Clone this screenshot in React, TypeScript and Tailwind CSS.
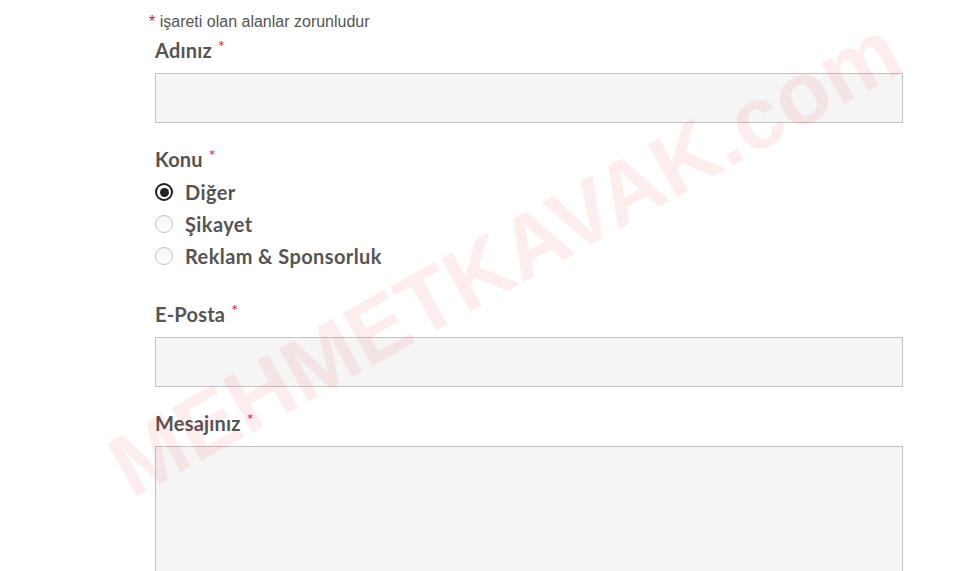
import React from "react"

const Req = () => <span className="ml-[6px] relative top-[-6px] text-[16px] font-normal text-[#e2142d]">*</span>

const Label = ({ children, className = "" }: { children: React.ReactNode; className?: string }) => (
  <div className={`h-[24px] leading-[24px] text-[20px] font-bold text-[#555] tracking-[0.2px] ${className}`}>
    {children}
    <Req />
  </div>
)

const Radio = ({ label, checked = false }: { label: string; checked?: boolean }) => (
  <label className="flex h-[32px] items-center gap-[12px]">
    {checked ? (
      <span className="flex h-[18px] w-[18px] items-center justify-center rounded-full border-2 border-[#222] bg-white">
        <span className="h-[9px] w-[9px] rounded-full bg-[#222]" />
      </span>
    ) : (
      <span className="h-[18px] w-[18px] rounded-full border border-[#c4c4c4] bg-gradient-to-b from-[#f4f4f4] to-white" />
    )}
    <span className="text-[20px] font-bold text-[#555] leading-[24px] tracking-[0.4px]">{label}</span>
  </label>
)

export default function App() {
  return (
    <div className="relative h-[571px] w-[966px] overflow-hidden bg-white" style={{ fontFamily: "Lato, 'Open Sans', sans-serif" }}>
      <div className="flex flex-col pl-[155px] pr-[63px] pt-[13px]">
        <p className="ml-[-6px] h-[18px] leading-[18px] text-[16px] text-[#555]" style={{ fontFamily: "'Liberation Sans', Arial, sans-serif" }}>
          <span className="text-[#e2142d]">*</span> işareti olan alanlar zorunludur
        </p>

        <Label className="mt-[7px]">Adınız</Label>
        <div className="mt-[11px] h-[50px] border border-[#c2c2c2] bg-[#f5f5f5]" />

        <Label className="mt-[24px]">Konu</Label>
        <div className="mt-[5px] flex flex-col">
          <Radio label="Diğer" checked />
          <Radio label="Şikayet" />
          <Radio label="Reklam & Sponsorluk" />
        </div>

        <Label className="mt-[30px]">E-Posta</Label>
        <div className="mt-[11px] h-[50px] border border-[#c2c2c2] bg-[#f5f5f5]" />

        <Label className="mt-[24px]">Mesajınız</Label>
        <div className="mt-[11px] h-[200px] border border-[#c2c2c2] bg-[#f5f5f5]" />
      </div>

      {/* watermark */}
      <div className="pointer-events-none absolute left-[505px] top-[258px] -translate-x-1/2 -translate-y-1/2 -rotate-[29deg] whitespace-nowrap text-[88px] font-bold leading-none text-[#e81818] opacity-[0.07]" style={{ fontFamily: "'Liberation Sans', Arial, sans-serif" }}>
        MEHMETKAVAK.com
      </div>
    </div>
  )
}
